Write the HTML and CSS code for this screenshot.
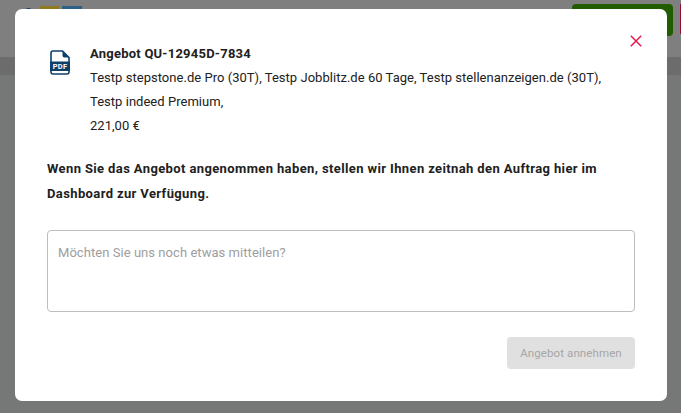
FILE: index.html
```html
<!DOCTYPE html>
<html lang="de">
<head>
<meta charset="utf-8">
<title>Angebot</title>
<link rel="stylesheet" href="styles.css">
</head>
<body>
<div class="page">
  <header class="topbar">
    <div class="logos">
      <span class="logo-round"></span>
      <span class="logo-gold"></span>
      <span class="logo-blue"></span>
    </div>
    <div class="actions">
      <span class="btn-green"></span>
      <span class="btn-red"></span>
    </div>
  </header>
  <div class="band"></div>
</div>
<div class="overlay">
  <section class="modal">
    <button class="close" aria-label="Schließen">
      <svg width="12" height="12" viewBox="0 0 12 12"><path d="M.8.8l10.4 10.4M11.200.8L.8 11.200" fill="none" stroke="#e6194f" stroke-width="1.500"/></svg>
    </button>
    <div class="offer">
      <svg class="pdf" width="20" height="25" viewBox="0 0 20 25">
        <path d="M3 1h9.500L19 7.500V22a2 2 0 0 1-2 2H3a2 2 0 0 1-2-2V3a2 2 0 0 1 2-2z" fill="#fff" stroke="#0f4069" stroke-width="1.600"/>
        <path d="M12.500 1v4.500a2 2 0 0 0 2 2H19z" fill="#0f4069"/>
        <rect x="0" y="11.500" width="20" height="9.500" fill="#0f4069"/>
        <text class="pdf-label" x="10" y="19">PDF</text>
      </svg>
      <div class="offer-text">
        <p class="offer-title">Angebot QU-12945D-7834</p>
        <p>Testp stepstone.de Pro (30T), Testp Jobblitz.de 60 Tage, Testp stellenanzeigen.de (30T), Testp indeed Premium,</p>
        <p>221,00 €</p>
      </div>
    </div>
    <p class="notice">Wenn Sie das Angebot angenommen haben, stellen wir Ihnen zeitnah den Auftrag hier im Dashboard zur Verfügung.</p>
    <textarea class="message" placeholder="Möchten Sie uns noch etwas mitteilen?"></textarea>
    <div class="footer">
      <button class="submit" disabled>Angebot annehmen</button>
    </div>
  </section>
</div>
</body>
</html>
```
FILE: styles.css
```css
* { box-sizing: border-box; }
html, body { margin: 0; height: 100%; overflow: hidden; }
body { background: #767878; font-family: Roboto, "Liberation Sans", sans-serif; color: #212121; }

.page { display: flex; flex-direction: column; }
.topbar {
  height: 57px;
  background: #7f7f7f;
  display: flex;
  justify-content: space-between;
  padding: 4px 0 0 23px;
}
.logos { display: flex; gap: 3px; align-items: flex-start; padding-top: 2px; }
.logo-round { width: 11px; height: 12px; margin: 2px 3px 0 0; border-radius: 50%; background: #1f3a5c; }
.logo-gold { width: 19px; height: 12px; background: #8f7a20; }
.logo-blue { width: 20px; height: 12px; background: #2b5f86; }
.actions { display: flex; gap: 7px; }
.btn-green { width: 101px; height: 32px; border-radius: 4px; background: #225c00; }
.btn-red { width: 1px; height: 30px; background: #8c1030; }
.band { height: 18px; background: #6c6c6c; }

.overlay {
  position: absolute;
  inset: 0;
  padding: 9px 14px 12px 15px;
}
.modal {
  position: relative;
  height: 392px;
  background: #fff;
  border-radius: 7px;
  padding: 33px 32px 32px;
  display: flex;
  flex-direction: column;
}
.close {
  position: absolute;
  top: 26px;
  right: 25px;
  padding: 0;
  border: 0;
  background: none;
  display: flex;
}
.offer { display: flex; gap: 20px; padding-left: 3px; padding-right: 20px; }
.pdf { margin-top: 8px; flex: none; width: 20px; }
.pdf-label { font: 700 7.500px Roboto, "Liberation Sans", sans-serif; fill: #fff; text-anchor: middle; letter-spacing: .3px; }
.offer-text { font-size: 13px; line-height: 24px; flex: 1; letter-spacing: .03px; }
.offer-text p { margin: 0; }
.offer-text .offer-title { font-weight: 700; letter-spacing: .23px; }
.notice {
  margin: 18px 0 0;
  font-size: 13px;
  line-height: 25px;
  font-weight: 700;
  letter-spacing: .38px;
}
.message {
  display: block;
  width: 100%;
  height: 82px;
  margin-top: 24px;
  padding: 13px 10px;
  border: 1px solid #bdbdbd;
  border-radius: 4px;
  font: 13px/17px Roboto, "Liberation Sans", sans-serif;
  letter-spacing: .05px;
  resize: none;
  outline: none;
}
.message::placeholder { color: #9e9e9e; opacity: 1; }
.footer { display: flex; justify-content: flex-end; margin-top: 25px; }
.submit {
  width: 128px;
  height: 32px;
  border: 0;
  border-radius: 4px;
  background: #e0e0e0;
  color: #a6a6a6;
  font: 400 11.500px Roboto, "Liberation Sans", sans-serif;
  letter-spacing: .1px;
}
```
